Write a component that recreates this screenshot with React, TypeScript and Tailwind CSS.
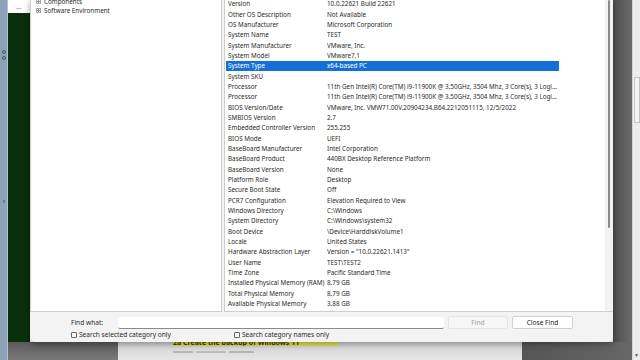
import React from 'react';

const rows: [string, string][] = [
  ['Version', '10.0.22621 Build 22621'],
  ['Other OS Description', 'Not Available'],
  ['OS Manufacturer', 'Microsoft Corporation'],
  ['System Name', 'TEST'],
  ['System Manufacturer', 'VMware, Inc.'],
  ['System Model', 'VMware7,1'],
  ['System Type', 'x64-based PC'],
  ['System SKU', ''],
  ['Processor', '11th Gen Intel(R) Core(TM) i9-11900K @ 3.50GHz, 3504 Mhz, 3 Core(s), 3 Logi...'],
  ['Processor', '11th Gen Intel(R) Core(TM) i9-11900K @ 3.50GHz, 3504 Mhz, 3 Core(s), 3 Logi...'],
  ['BIOS Version/Date', 'VMware, Inc. VMW71.00V.20904234.B64.2212051115, 12/5/2022'],
  ['SMBIOS Version', '2.7'],
  ['Embedded Controller Version', '255.255'],
  ['BIOS Mode', 'UEFI'],
  ['BaseBoard Manufacturer', 'Intel Corporation'],
  ['BaseBoard Product', '440BX Desktop Reference Platform'],
  ['BaseBoard Version', 'None'],
  ['Platform Role', 'Desktop'],
  ['Secure Boot State', 'Off'],
  ['PCR7 Configuration', 'Elevation Required to View'],
  ['Windows Directory', 'C:\\Windows'],
  ['System Directory', 'C:\\Windows\\system32'],
  ['Boot Device', '\\Device\\HarddiskVolume1'],
  ['Locale', 'United States'],
  ['Hardware Abstraction Layer', 'Version = "10.0.22621.1413"'],
  ['User Name', 'TEST\\TEST2'],
  ['Time Zone', 'Pacific Standard Time'],
  ['Installed Physical Memory (RAM)', '8.79 GB'],
  ['Total Physical Memory', '8.79 GB'],
  ['Available Physical Memory', '3.88 GB'],
];

function Expander() {
  return (
    <span className="w-[5px] h-[5px] border border-[#a8a8a8] flex items-center justify-center shrink-0">
      <svg width="3" height="3" viewBox="0 0 3 3">
        <path d="M0 1.5H3M1.5 0V3" stroke="#777" strokeWidth="0.8" />
      </svg>
    </span>
  );
}

function Checkbox({ label }: { label: string }) {
  return (
    <div className="flex items-center gap-[2px]">
      <span className="w-[6px] h-[6px] border border-[#666] bg-white rounded-[1px]" />
      <span>{label}</span>
    </div>
  );
}

export default function App() {
  return (
    <div className="relative w-[640px] h-[360px] overflow-hidden flex bg-[#6a6a6a] font-['Noto_Sans',sans-serif] text-[#2a2a2a]">
      {/* desktop left strip */}
      <div className="w-[8px] h-full bg-[#8da1b7] border-r border-[#b3c2d2] flex flex-col items-center">
        <div className="mt-[50px] w-[4px] h-[4px] rounded-full border border-[#4a5868]" />
        <div className="mt-[2px] w-[4px] h-[4px] rounded-full border border-[#4a5868]" />
        <div className="mt-[140px] w-[2px] h-[3px] bg-[#6c7e92]" />
      </div>

      {/* background document */}
      <div className="flex-1 flex flex-col">
        <div className="h-[342px] flex">
          <div className="w-[22px] flex flex-col">
            <div className="h-[13px] bg-white flex items-center justify-center text-[9px] text-[#9a9a9a] leading-none">←</div>
            <div className="flex-1 bg-[#0a2f0c]" />
          </div>
          <div className="flex-1 bg-white" />
          <div className="w-[19px] bg-gradient-to-r from-[#4e4e4e] to-[#6a6a6a]" />
        </div>
        <div className="flex-1 flex">
          <div className="w-[110px] bg-gradient-to-b from-[#5a5a5a] to-[#7a7a7a]" />
          <div className="w-[404px] bg-gradient-to-b from-[#d2d2d2] to-[#e6e6e6] flex flex-col pl-[55px]">
            <div className="-mt-[3px] w-[165px] h-[7px] bg-[#e3e14a] text-[7px] leading-[7px] font-bold text-[#3a3a20] whitespace-nowrap overflow-hidden">
              2a Create the backup of Windows 11
            </div>
            <div className="mt-[5px] flex gap-[3px]">
              <span className="w-[20px] h-[2px] bg-[#b5b5b5]" />
              <span className="w-[30px] h-[2px] bg-[#bdbdbd]" />
              <span className="w-[25px] h-[2px] bg-[#b5b5b5]" />
            </div>
          </div>
          <div className="flex-1 bg-gradient-to-r from-[#555] to-[#666]" />
        </div>
      </div>

      {/* right scrollbar */}
      <div className="w-[8px] h-full bg-[#ececec] border-l border-[#d5d5d5] flex flex-col items-center">
        <div className="mt-[77px] w-[6px] h-[46px] bg-[#f4f4f4] border border-[#c4c4c4]" />
        <div className="mt-auto mb-[2px] text-[5px] leading-none text-[#555]">▼</div>
      </div>

      {/* System Information window */}
      <div className="absolute left-[30px] top-0 w-[583px] h-[342px] bg-[#f3f3f3] rounded-b-[5px] shadow-[0_2px_6px_rgba(0,0,0,0.35)] flex flex-col text-[6.3px]">
        <div className="h-[312px] flex gap-[2px]">
          {/* tree pane */}
          <div className="w-[192px] bg-white border-l border-b border-r border-[#cfcfcf] flex flex-col pl-[5px]">
            <div className="flex items-center gap-[3px] h-[9px] -mt-[3px]">
              <Expander />
              <span>Components</span>
            </div>
            <div className="flex items-center gap-[3px] h-[9px]">
              <Expander />
              <span>Software Environment</span>
            </div>
          </div>

          {/* list pane */}
          <div className="flex-1 bg-white border-l border-b border-[#cfcfcf] flex">
            <div className="flex-1 flex flex-col pl-[1px] -mt-[1px] overflow-hidden">
              {rows.map(([label, value], i) => {
                const sel = label === 'System Type';
                return (
                  <div
                    key={i}
                    className={`w-[333px] h-[10.33px] flex items-center shrink-0 whitespace-nowrap ${sel ? 'bg-[#1470d6] text-white' : ''}`}
                  >
                    <span className="w-[101px] pl-[2px] shrink-0 overflow-hidden">{label}</span>
                    <span className="flex-1 overflow-hidden">{value}</span>
                  </div>
                );
              })}
            </div>
            <div className="w-[8px] bg-[#f2f2f2] flex justify-center">
              <div className="w-[1.5px] h-[228px] bg-[#8a8a8a] rounded-full" />
            </div>
          </div>
        </div>

        {/* find bar */}
        <div className="flex-1 flex flex-col pl-[41px] text-[6.6px]">
          <div className="mt-[4px] h-[13px] flex items-center">
            <span className="w-[47px]">Find what:</span>
            <div className="w-[326px] h-[12px] bg-white border-b border-[#8a8a8a] rounded-[2px]" />
            <div className="ml-[4px] w-[60px] h-[13px] bg-[#f6f6f6] border border-[#e4e4e4] rounded-[2px] flex items-center justify-center text-[#a5a5a5]">
              Find
            </div>
            <div className="ml-[4px] w-[61px] h-[13px] bg-white border border-[#d0d0d0] rounded-[2px] flex items-center justify-center text-[#1e1e1e]">
              Close Find
            </div>
          </div>
          <div className="mt-[1px] flex items-center h-[9px]">
            <div className="w-[163px]">
              <Checkbox label="Search selected category only" />
            </div>
            <Checkbox label="Search category names only" />
          </div>
        </div>
      </div>
    </div>
  );
}
